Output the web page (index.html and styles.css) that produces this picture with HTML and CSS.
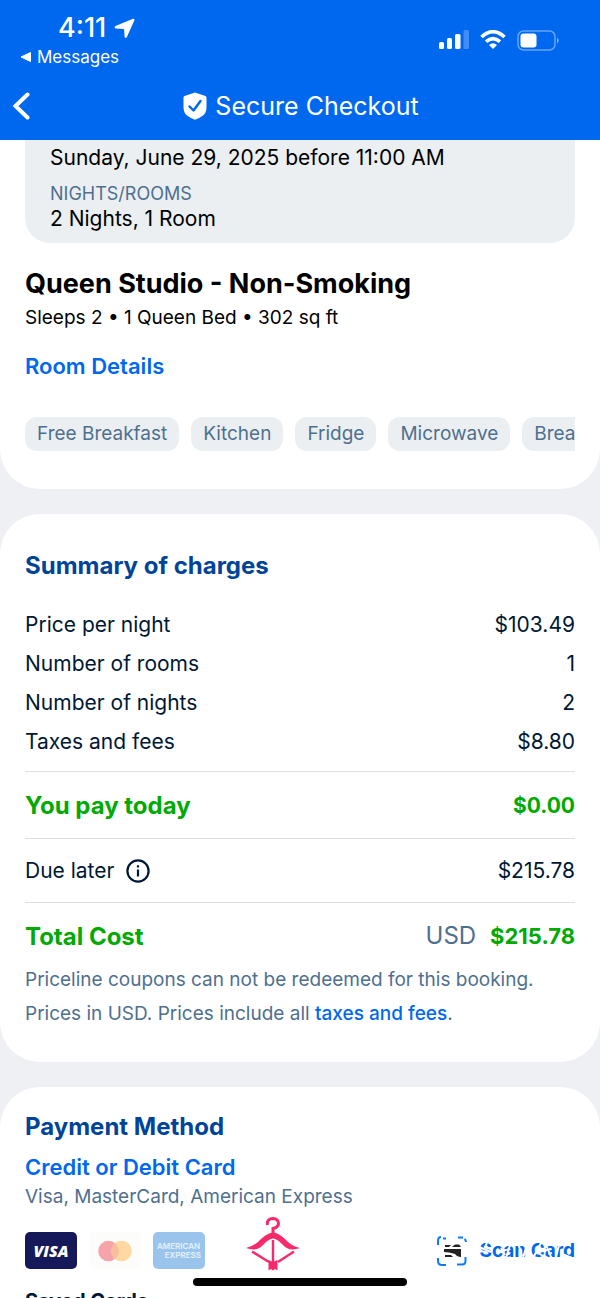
FILE: index.html
```html
<!DOCTYPE html>
<html lang="en">
<head>
    <meta charset="UTF-8">
    <meta name="viewport" content="width=device-width, initial-scale=1.0">
    <title>Secure Checkout</title>
    <link rel="stylesheet" href="styles.css">
</head>
<body>
    <header>
        <div class="status-bar">
            <div class="status-left">
                <div class="clock">4:11
                    <svg width="21" height="21" viewBox="0 0 21 21"><path d="M19 0.800 L1.500 8 Q-0.300 9.500 1.500 10.500 L10 10.900 L10.600 19 Q11.500 21 12.900 19 L20.400 2.200 Q20.600 0.500 19 0.800 Z" fill="#fff"/></svg>
                </div>
                <a class="back-app" href="#">
                    <svg width="12" height="12" viewBox="0 0 12 12"><path d="M10.500 1.500 V10.500 L1 6 Z" fill="#fff" stroke="#fff" stroke-linejoin="round"/></svg>
                    Messages
                </a>
            </div>
            <div class="status-right">
                <svg width="30" height="20" viewBox="0 0 30 20" fill="#fff">
                    <rect x="0" y="12" width="5" height="7" rx="1.500"/>
                    <rect x="8" y="8" width="5" height="11" rx="1.500"/>
                    <rect x="16" y="4" width="5.500" height="15" rx="1.500"/>
                    <rect x="24.500" y="0" width="5.500" height="19" rx="1.500" opacity="0.25"/>
                </svg>
                <svg width="26" height="20" viewBox="0 0 26 20" fill="none" stroke="#fff" stroke-width="3.600">
                    <path d="M1.500 7 Q13 -3.600 24.500 7"/>
                    <path d="M6 11.700 Q13 5.400 20 11.700"/>
                    <path d="M13 19 L9 15 Q13 11.700 17 15 Z" fill="#fff" stroke="none"/>
                </svg>
                <svg width="43" height="21" viewBox="0 0 43 21">
                    <rect x="1" y="1" width="37" height="19" rx="5.500" fill="none" stroke="#fff" stroke-opacity="0.4" stroke-width="1.500"/>
                    <rect x="3.500" y="3.500" width="16" height="14" rx="3" fill="#fff"/>
                    <path d="M40 7.500 Q43.500 10.500 40 13.500 Z" fill="#fff" opacity="0.5"/>
                </svg>
            </div>
        </div>
        <div class="title-bar">
            <button class="back-button" aria-label="Back">
                <svg width="18" height="28" viewBox="0 0 18 28"><path d="M15.500 2.500 L3.500 14 L15.500 25.500" fill="none" stroke="#fff" stroke-width="4" stroke-linecap="round" stroke-linejoin="miter"/></svg>
            </button>
            <h1>
                <svg width="24" height="28" viewBox="0 0 24 28">
                    <path d="M12 0.500 L22.500 4 Q23.500 4.500 23.500 5.500 V15 Q23.500 21 20 23.500 Q16 26.500 12 27.700 Q8 26.500 4 23.500 Q0.500 21 0.500 15 V5.500 Q0.500 4.500 1.500 4 Z" fill="#fff"/>
                    <path d="M6.500 14.500 L10.500 18.500 L17.500 9" fill="none" stroke="#0068ef" stroke-width="2.400" stroke-linecap="round" stroke-linejoin="round"/>
                </svg>
                Secure Checkout
            </h1>
        </div>
    </header>

    <main>
        <section class="card room">
            <div class="stay">
                <p>Sunday, June 29, 2025 before 11:00 AM</p>
                <p class="stay-label">NIGHTS/ROOMS</p>
                <p>2 Nights, 1 Room</p>
            </div>
            <h2 class="room-name">Queen Studio - Non-Smoking</h2>
            <p class="room-info">Sleeps 2 • 1 Queen Bed • 302 sq ft</p>
            <a class="strong-link" href="#">Room Details</a>
            <ul class="tags">
                <li>Free Breakfast</li>
                <li>Kitchen</li>
                <li>Fridge</li>
                <li>Microwave</li>
                <li>Brea</li>
            </ul>
        </section>

        <section class="card summary">
            <h2>Summary of charges</h2>
            <dl>
                <div class="row"><dt>Price per night</dt><dd>$103.49</dd></div>
                <div class="row"><dt>Number of rooms</dt><dd>1</dd></div>
                <div class="row"><dt>Number of nights</dt><dd>2</dd></div>
                <div class="row"><dt>Taxes and fees</dt><dd>$8.80</dd></div>
                <div class="row ruled green today"><dt>You pay today</dt><dd>$0.00</dd></div>
                <div class="row ruled">
                    <dt>Due later
                        <button class="info-button" aria-label="About due later">
                            <svg width="24" height="24" viewBox="0 0 24 24" fill="none" stroke="#001833" stroke-width="2.200">
                                <circle cx="12" cy="12" r="10.600"/>
                                <path d="M12 10.500 V17.500 M12 6.300 V8.600"/>
                            </svg>
                        </button>
                    </dt>
                    <dd>$215.78</dd>
                </div>
                <div class="row ruled green total"><dt>Total Cost</dt><dd><span class="currency">USD</span>$215.78</dd></div>
            </dl>
            <p class="note">Priceline coupons can not be redeemed for this booking.</p>
            <p class="note">Prices in USD. Prices include all <a href="#">taxes and fees</a>.</p>
        </section>

        <section class="card payment">
            <h2>Payment Method</h2>
            <a class="strong-link" href="#">Credit or Debit Card</a>
            <p class="accepted">Visa, MasterCard, American Express</p>
            <div class="pay-row">
                <div class="brands">
                    <span class="brand visa">VISA</span>
                    <span class="brand mastercard">
                        <svg width="34" height="22" viewBox="0 0 34 22">
                            <circle cx="10.500" cy="11" r="10.300" fill="#f7a3aa"/>
                            <circle cx="23.500" cy="11" r="10.300" fill="#ffd8a2"/>
                            <path d="M17 3 A10.300 10.300 0 0 1 17 19 A10.300 10.300 0 0 1 17 3" fill="#fabd9f"/>
                        </svg>
                    </span>
                    <span class="brand amex"><span>AMERICAN</span><span>EXPRESS</span></span>
                </div>
                <button class="scan-button">
                    <svg width="30" height="30" viewBox="0 0 30 30">
                        <path d="M1 9 V5 Q1 1 4 1 M6 2.500 H9 M21 1.500 H26 M27.500 3 Q29 4 29 6 M1 22 V25 Q1 29 5 29 H9 M20 28.500 H25 Q28.500 28.500 28.500 25 V21" fill="none" stroke="#0a7bff" stroke-width="2"/>
                        <path d="M8 9 H14 L12 11 H8 Z M15 11 L18 8.500 H22 L24 11 Z M7 13 H24 V21 Q20 21 18 18 Q12 16 7 16 Z M8 19 H14 L16 21 H8 Z" fill="#222"/>
                    </svg>
                    Scan Card
                    <!-- worn-out look over the label -->
                    <svg class="wear" width="96" height="22" viewBox="0 0 96 22" fill="none" stroke="#fff" stroke-width="2">
                        <path d="M0 7 L12 12 M8 3 L6 7 M22 8 L26 15 M31 5 L27 18 M40 6 L43 16 M48 4 L44 18 M54 18 L62 3 M59 13 L66 17 M68 7 L72 17 M80 5 L77 17 M83 14 L93 18"/>
                    </svg>
                </button>
            </div>
            <h3>Saved Cards</h3>
        </section>
    </main>

    <svg class="hanger" width="54" height="54" viewBox="0 0 54 54" fill="none" stroke="#f72b6b">
        <path d="M21.500 8 Q20.500 1.700 27 1.500 Q32.500 1.700 32.500 7 Q32 10.500 27 11.500 V17" stroke-width="3"/>
        <path d="M0 31 Q9 29 15 22 Q22 15.500 27 15.500 Q32 15.500 39 22 Q45 29 54 31 Q43 35 37 28 Q31 21.500 27 21.500 Q23 21.500 17 28 Q11 35 0 31 Z" fill="#f72b6b" stroke="none"/>
        <path d="M6 34.500 L23 45 M48 34.500 L32 45 M27 23 V46" stroke-width="2.400"/>
        <path d="M22.500 43 L27 45 L31.500 43 V53.500 L29 52 L27 53.500 L25 52 L22.500 53.500 Z" fill="#f72b6b" stroke="none"/>
    </svg>
    <div class="home-bar"></div>
</body>
</html>
```
FILE: styles.css
```css
* {
    box-sizing: border-box;
}

body {
    font-family: Inter, "Liberation Sans", sans-serif;
    margin: 0;
    height: 100vh;
    display: flex;
    flex-direction: column;
    overflow: hidden;
    position: relative;
    background: #eff0f4;
    color: #001833;
    font-size: 21px;
    line-height: 26px;
}

h1, h2, h3, p, ul, dl, dd {
    margin: 0;
    padding: 0;
}

a {
    color: #0068ef;
    text-decoration: none;
}

button {
    border: none;
    background: none;
    padding: 0;
    font: inherit;
    cursor: pointer;
}

svg {
    display: block;
}

header {
    background: #0068ef;
    color: #fff;
    flex: none;
}

.status-bar {
    display: flex;
    justify-content: space-between;
    padding: 12px 40px 0 20px;
}

.clock {
    display: flex;
    align-items: center;
    gap: 8px;
    padding-left: 38px;
    font-size: 27px;
    font-weight: 500;
    line-height: 32px;
}

.back-app {
    display: flex;
    align-items: center;
    gap: 5px;
    color: #fff;
    font-size: 17px;
    font-weight: 400;
}

.status-right {
    display: flex;
    align-items: center;
    gap: 11px;
    height: 56px;
}

.title-bar {
    display: grid;
    grid-template-columns: 40px 1fr 38px;
    align-items: center;
    height: 70px;
    padding: 2px 12px 0;
}

h1 {
    display: flex;
    justify-content: center;
    align-items: center;
    gap: 8px;
    font-size: 25px;
    font-weight: 400;
}

main {
    flex: 1;
    min-height: 0;
    display: flex;
    flex-direction: column;
    gap: 25px;
    overflow: hidden;
}

.card {
    flex: none;
    background: #fff;
    border-radius: 40px;
    padding: 39px 25px 31px;
}

.card.room {
    border-radius: 0 0 40px 40px;
    padding: 0 25px 38px;
}

.stay {
    background: #ebeff2;
    border-radius: 0 0 25px 25px;
    padding: 5px 25px 11px;
    color: #000;
}

.stay .stay-label {
    margin-top: 11px;
    color: #4f6f8f;
    font-size: 18px;
    line-height: 24px;
}

h2 {
    color: #004499;
    font-size: 24px;
    line-height: 26px;
    font-weight: 700;
}

.room-name {
    margin-top: 25px;
    color: #000;
    font-size: 27px;
    line-height: 32px;
}

.room-info {
    margin-top: 5px;
    color: #000;
    font-size: 19px;
    font-weight: 400;
}

.strong-link {
    font-size: 22px;
    font-weight: 600;
}

.room .strong-link {
    display: block;
    margin-top: 22px;
}

.tags {
    display: flex;
    gap: 12px;
    margin-top: 38px;
    overflow: hidden;
    list-style: none;
}

.tags li {
    flex: none;
    padding: 4px 12px;
    border-radius: 12px;
    background: #ebeff2;
    color: #4f6f8f;
    font-size: 19px;
    font-weight: 400;
}

dl {
    margin-top: 26px;
}

.row {
    display: flex;
    justify-content: space-between;
    align-items: center;
    padding: 6px 0;
    line-height: 27px;
}

.row dt {
    display: flex;
    align-items: center;
    gap: 12px;
}

.row.ruled {
    border-top: 1px solid #dcdfe3;
    padding: 18px 0;
}

.row.green {
    color: #00aa00;
    font-weight: 700;
    padding: 20px 0 19px;
}

.row.green dt {
    font-size: 24px;
}

.row.today {
    margin-top: 10px;
}

.row.total {
    padding: 19px 0 13px;
    font-size: 22px;
}

.currency {
    margin-right: 14px;
    color: #4f6f8f;
    font-size: 24px;
    font-weight: 400;
}

.note {
    color: #4f6f8f;
    font-size: 19px;
    line-height: 34px;
}

.note a {
    font-weight: 500;
}

.card.payment {
    padding-top: 27px;
    border-radius: 40px 40px 0 0;
}

.payment .strong-link {
    display: block;
    margin-top: 14px;
}

.accepted {
    margin-top: 4px;
    color: #4f6f8f;
    font-size: 19px;
}

.pay-row {
    display: flex;
    justify-content: space-between;
    align-items: center;
    margin-top: 22px;
}

.brands {
    display: flex;
    gap: 12px;
}

.brand {
    display: flex;
    align-items: center;
    justify-content: center;
    width: 52px;
    height: 37px;
    border-radius: 5px;
}

.visa {
    background: #15195a;
    color: #fff;
    font-family: "Open Sans", sans-serif;
    font-size: 16px;
    font-style: italic;
    font-weight: 800;
}

.mastercard {
    background: #fcfcfb;
}

.amex {
    flex-direction: column;
    align-items: stretch;
    padding: 0 4px;
    background: #9bc4ed;
    color: #e4f1fd;
    font-size: 8px;
    line-height: 9px;
    font-weight: 600;
}

.amex span:last-child {
    text-align: right;
}

.scan-button {
    position: relative;
    display: flex;
    align-items: center;
    gap: 12px;
    color: #0068ef;
    font-size: 19px;
    font-weight: 700;
}

.wear {
    position: absolute;
    right: 0;
    top: 4px;
}

h3 {
    margin-top: 19px;
    font-size: 20px;
    line-height: 26px;
    font-weight: 700;
}

.hanger {
    position: absolute;
    left: 41%;
    bottom: 27px;
}

.home-bar {
    position: absolute;
    bottom: 12px;
    left: 50%;
    width: 214px;
    height: 8px;
    margin-left: -107px;
    border-radius: 4px;
    background: #000;
}
```
